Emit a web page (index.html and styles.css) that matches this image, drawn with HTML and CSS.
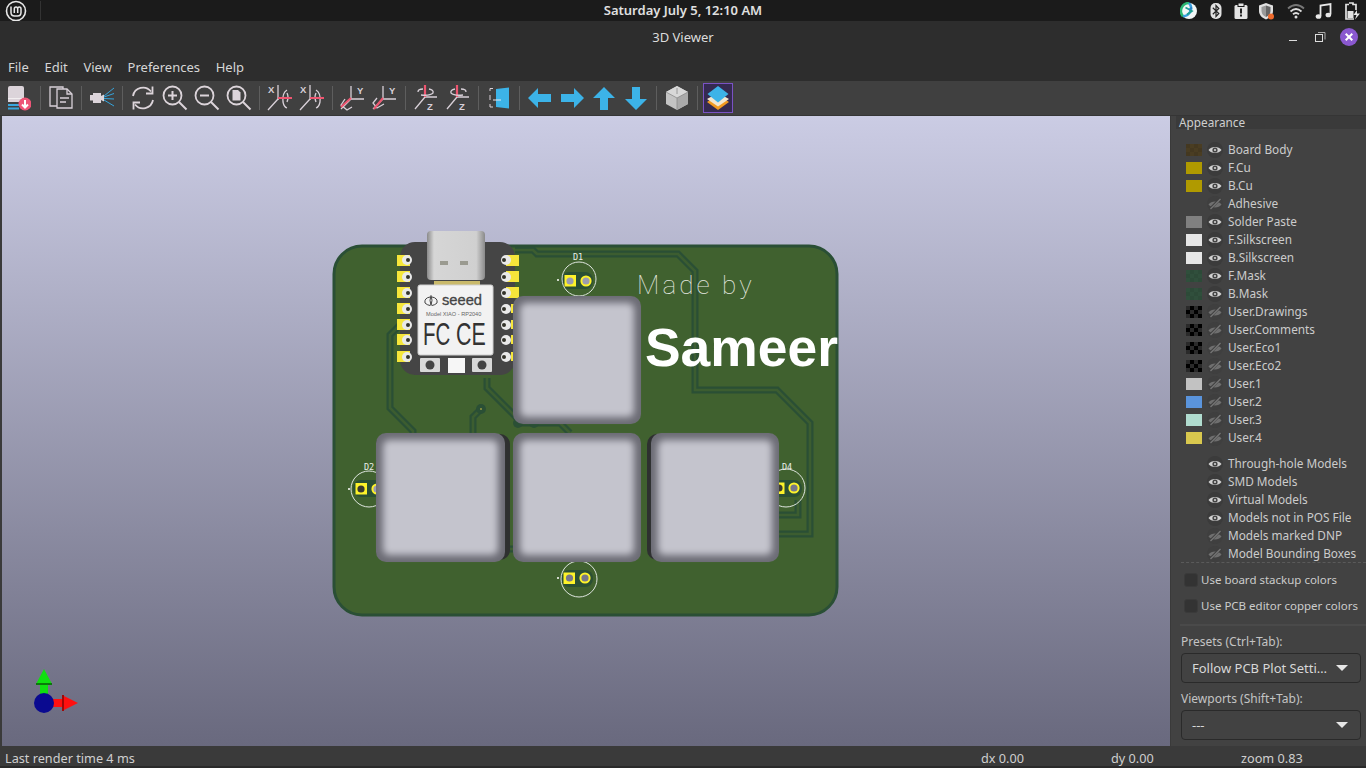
FILE: index.html
```html
<!DOCTYPE html>
<html lang="en">
<head>
<meta charset="utf-8">
<title>3D Viewer</title>
<link rel="stylesheet" href="styles.css">
</head>
<body>
<svg class="defs" width="0" height="0">
  <defs>
    <symbol id="eye" viewBox="0 0 16 16"><circle cx="8" cy="8" r="8" fill="#3b3b3b"/><path d="M1.5 8C4 4 12 4 14.500 8C12 12 4 12 1.500 8Z" fill="#d0d0d0"/><circle cx="8" cy="8" r="2.600" fill="#444"/><circle cx="8" cy="8" r="1.100" fill="#d0d0d0"/></symbol>
    <symbol id="eyeoff" viewBox="0 0 16 16"><circle cx="8" cy="8" r="8" fill="#3f3f3f"/><path d="M1.500 8.500C4 4.500 12 4.500 14.500 8.500C12 12.500 4 12.500 1.500 8.500Z" fill="#6f6f6f"/><path d="M3 13L13 3" stroke="#3f3f3f" stroke-width="2.600"/><path d="M3.500 13L13.500 3" stroke="#777" stroke-width="1.200"/></symbol>
    <filter id="soft" x="-20%" y="-20%" width="140%" height="140%"><feGaussianBlur stdDeviation="3.500"/></filter>
    <linearGradient id="usb" x1="0" x2="1" y1="0" y2="0"><stop offset="0" stop-color="#8a8a8a"/><stop offset=".12" stop-color="#d6d6d6"/><stop offset=".85" stop-color="#d0d0d0"/><stop offset="1" stop-color="#8a8a8a"/></linearGradient>
    <g id="trace-set">
      <path d="M515 250H533L537 254H678L695 271V390H777L810 423V534H770"/>
      <path d="M403 322L390 335V408L413 431V440"/>
      <path d="M481 409L473 417V440"/>
      <path d="M487 378V388L516 417L520 423H560L570 433"/>
      <path d="M504 549H516"/>
      <path d="M775 515H798V500"/>
    </g>
  </defs>
</svg>

<header class="panel">
  <svg class="mint" viewBox="0 0 22 22"><circle cx="11" cy="11" r="9.500" fill="none" stroke="#e8e8e8" stroke-width="1.600"/><path d="M6 6.500V12.500Q6 16 9.500 16H12.500Q16 16 16 12.500V9Q16 7 14.300 7Q12.700 7 12.700 9V13M12.700 9Q12.700 7 11 7Q9.300 7 9.300 9V13" fill="none" stroke="#e8e8e8" stroke-width="1.500"/></svg>
  <span class="panel-sep"></span>
  <span class="clock">Saturday July 5, 12:10 AM</span>
  <div class="tray">
    <svg class="tray-icon t1" viewBox="0 0 18 18"><circle cx="9" cy="9" r="8" fill="#f2f6f6"/><path d="M9 1A8 8 0 0 0 3 14.300" fill="none" stroke="#2bb673" stroke-width="2.500"/><path d="M9 1A8 8 0 0 1 3 14.300" fill="none" stroke="#3a9fe0" stroke-width="2.500"/><path d="M5.500 5.500L12 9L7 12.500" fill="none" stroke="#1e9f8f" stroke-width="1.700"/><path d="M12 5.500L9 8" fill="none" stroke="#2a80c0" stroke-width="1.700"/></svg>
    <svg class="tray-icon t2" viewBox="0 0 18 18"><rect x="3.500" y="1" width="11" height="16" rx="5" fill="#e2e2e2"/><path d="M5.800 5.800L11.800 11.500L9 14.500V3.500L11.800 6.500L5.800 12.200" fill="none" stroke="#222" stroke-width="1.200"/></svg>
    <svg class="tray-icon t3" viewBox="0 0 18 18"><rect x="2.500" y="3" width="13" height="14" rx="1.500" fill="#e4e4e4"/><rect x="6" y="1" width="6" height="3.500" fill="#e4e4e4" stroke="#1a1a1a"/><rect x="8" y="6.500" width="2" height="5" fill="#222"/><rect x="8" y="12.500" width="2" height="2" fill="#222"/></svg>
    <svg class="tray-icon t4" viewBox="0 0 18 18"><path d="M9 1L16 3.500V9C16 13 13 16 9 17.500C5 16 2 13 2 9V3.500Z" fill="#e0e0e0"/><path d="M9 3.500L13.500 5V9C13.500 12 11.500 14 9 15Z" fill="#666"/><path d="M9 3.500L4.500 5V9C4.500 12 6.500 14 9 15Z" fill="#9a9a9a"/><circle cx="14" cy="14.500" r="3" fill="#ee6a2c"/></svg>
    <svg class="tray-icon t5" viewBox="0 0 18 18"><path d="M1 6.500Q9 -.5 17 6.500" fill="none" stroke="#777" stroke-width="1.800"/><path d="M3.500 9.500Q9 4.500 14.500 9.500" fill="none" stroke="#ddd" stroke-width="1.800"/><path d="M6 12.300Q9 9.700 12 12.300" fill="none" stroke="#ddd" stroke-width="1.800"/><circle cx="9" cy="15" r="1.500" fill="#ddd"/></svg>
    <svg class="tray-icon t6" viewBox="0 0 18 18"><path d="M5.500 14V3.500L15.500 2V12.500" fill="none" stroke="#e8e8e8" stroke-width="1.800"/><ellipse cx="3.500" cy="14.500" rx="2.800" ry="2.300" fill="#e8e8e8"/><ellipse cx="13.300" cy="13" rx="2.800" ry="2.300" fill="#e8e8e8"/></svg>
    <svg class="tray-icon t7" viewBox="0 0 18 18"><path d="M6 1H10V2.500H13V8M11 17H3V2.500H6" fill="none" stroke="#e2e2e2" stroke-width="1.700"/><rect x="4.500" y="9" width="6" height="7" fill="#e2e2e2"/><path d="M14 8L10.500 13H13.500L12 17.500L17 11.500H14Z" fill="#e8e8e8"/></svg>
  </div>
</header>

<div class="titlebar">
  <span class="title">3D Viewer</span>
  <div class="win-buttons">
    <svg class="win-icon" viewBox="0 0 14 14"><rect x="3" y="10" width="8" height="1" fill="#ddd"/></svg>
    <svg class="win-icon" viewBox="0 0 14 14"><path d="M5 2.500H12V9.500" fill="none" stroke="#aaa"/><rect x="2.500" y="4.500" width="7" height="7" fill="none" stroke="#ddd"/></svg>
    <svg class="win-close" viewBox="0 0 18 18"><circle cx="9" cy="9" r="9" fill="#8a58cf"/><path d="M5.700 5.700L12.300 12.300M12.300 5.700L5.700 12.300" stroke="#fff" stroke-width="2"/></svg>
  </div>
</div>

<nav class="menubar">
  <span class="menu-item">File</span>
  <span class="menu-item">Edit</span>
  <span class="menu-item">View</span>
  <span class="menu-item">Preferences</span>
  <span class="menu-item">Help</span>
</nav>

<div class="toolbar">
  <button class="tool tool-first"><svg viewBox="0 0 26 26"><path d="M3 3Q3 1 5 1H17Q19 1 19 3V17H3Z" fill="#dcd4da"/><path d="M3 13.500H19" stroke="#f2eef0"/><rect x="3" y="19" width="11" height="2" fill="#39a6dd"/><rect x="3" y="22.500" width="11" height="2" fill="#39a6dd"/><circle cx="20" cy="19" r="6.500" fill="#ee5577"/><path d="M20 15V22M17 19.500L20 22.500L23 19.500" fill="none" stroke="#fff" stroke-width="2"/></svg></button>
  <span class="sep"></span>
  <button class="tool"><svg viewBox="0 0 26 26"><path d="M2 2H15V21H2Z" fill="none" stroke="#d8d0d8" stroke-width="1.300"/><path d="M9 4H19L24 9V23H9Z" fill="#404040" stroke="#d8d0d8" stroke-width="1.300"/><path d="M19 4V9H24" fill="none" stroke="#d8d0d8" stroke-width="1.300"/><path d="M12 13H21M12 17H18" stroke="#d8d0d8" stroke-width="1.300"/></svg></button>
  <span class="sep"></span>
  <button class="tool"><svg viewBox="0 0 26 26"><path d="M1 10H4V8H12V11L15 9.500V16.500L12 15V18H4V15.500H1Z" fill="#dcd4da"/><path d="M15 11L25 3M15 12L25 8.500M15 13.500L25 14M15 15L25 21" stroke="#35a5dd" stroke-width="1"/></svg></button>
  <span class="sep"></span>
  <button class="tool"><svg viewBox="0 0 26 26"><path d="M3 11A10.200 10.200 0 0 1 21 6.500M23 15A10.200 10.200 0 0 1 5 19.500" fill="none" stroke="#dcd4da" stroke-width="1.800"/><path d="M22.500 1.500V8.500H16M3.500 24.500V17.500H10" fill="none" stroke="#dcd4da" stroke-width="1.800"/></svg></button>
  <button class="tool"><svg viewBox="0 0 26 26"><circle cx="10.500" cy="10.500" r="9" fill="none" stroke="#dcd4da" stroke-width="1.800"/><path d="M17 17L24.500 24.500" stroke="#dcd4da" stroke-width="2"/><path d="M10.500 6V15M6 10.500H15" stroke="#dcd4da" stroke-width="2"/></svg></button>
  <button class="tool"><svg viewBox="0 0 26 26"><circle cx="10.500" cy="10.500" r="9" fill="none" stroke="#dcd4da" stroke-width="1.800"/><path d="M17 17L24.500 24.500" stroke="#dcd4da" stroke-width="2"/><path d="M6 10.500H15" stroke="#dcd4da" stroke-width="2"/></svg></button>
  <button class="tool"><svg viewBox="0 0 26 26"><circle cx="10.500" cy="10.500" r="9" fill="none" stroke="#dcd4da" stroke-width="1.800"/><path d="M17 17L24.500 24.500" stroke="#dcd4da" stroke-width="2"/><path d="M6.500 5H12L14.500 7.500V15.500H6.500Z" fill="#dcd4da"/></svg></button>
  <span class="sep"></span>
  <button class="tool"><svg viewBox="0 0 26 26"><text x="1" y="8" class="axis-letter">X</text><path d="M11 0V14M1 25L11 14H12" fill="none" stroke="#d8d0d8" stroke-width="1.300"/><path d="M20 5Q15 8 16 17Q17 22 20 23M20 8Q22 12 20 17" fill="none" stroke="#d8d0d8" stroke-width="1.300"/><rect x="11" y="12" width="14" height="2" fill="#ee5570"/></svg></button>
  <button class="tool"><svg viewBox="0 0 26 26"><text x="1" y="8" class="axis-letter">X</text><path d="M11 0V14M1 25L11 14H12" fill="none" stroke="#d8d0d8" stroke-width="1.300"/><path d="M17 5Q22 8 21 17Q20 22 17 23M17 8Q15 12 17 17" fill="none" stroke="#d8d0d8" stroke-width="1.300"/><rect x="11" y="12" width="14" height="2" fill="#ee5570"/></svg></button>
  <span class="sep"></span>
  <button class="tool"><svg viewBox="0 0 26 26"><text x="17" y="9" class="axis-letter">Y</text><path d="M11 1V14H24M1 24L11 14" fill="none" stroke="#d8d0d8" stroke-width="1.300"/><path d="M5 14L1 20L7 25L12 22" fill="none" stroke="#d8d0d8" stroke-width="1.300"/><path d="M1 22L11 13" stroke="#ee5570" stroke-width="2"/></svg></button>
  <button class="tool"><svg viewBox="0 0 26 26"><text x="17" y="9" class="axis-letter">Y</text><path d="M11 1V14H24M1 24L11 14" fill="none" stroke="#d8d0d8" stroke-width="1.300"/><path d="M5 13L1 18L5 23L12 19" fill="none" stroke="#d8d0d8" stroke-width="1.300"/><path d="M2 24L11 13" stroke="#ee5570" stroke-width="2"/></svg></button>
  <span class="sep"></span>
  <button class="tool"><svg viewBox="0 0 26 26"><text x="14" y="25" class="axis-letter">Z</text><path d="M12 12H24M12 12L2 24" fill="none" stroke="#d8d0d8" stroke-width="1.300"/><path d="M12 0V12" stroke="#ee5570" stroke-width="2.200"/><path d="M5 7Q5 4 10 4M16 4Q21 5 20 8Q17 11 8 10" fill="none" stroke="#d8d0d8" stroke-width="1.300"/></svg></button>
  <button class="tool"><svg viewBox="0 0 26 26"><text x="14" y="25" class="axis-letter">Z</text><path d="M12 12H24M12 12L2 24" fill="none" stroke="#d8d0d8" stroke-width="1.300"/><path d="M12 0V12" stroke="#ee5570" stroke-width="2.200"/><path d="M21 7Q21 4 16 4M10 4Q5 5 6 8Q9 11 18 10" fill="none" stroke="#d8d0d8" stroke-width="1.300"/></svg></button>
  <span class="sep"></span>
  <button class="tool"><svg viewBox="0 0 26 26"><path d="M4 6V3.500H7M4 19V22H7M4 10V15" fill="none" stroke="#d8d0d8" stroke-width="1"/><path d="M10 4L23 2.500V23.500L10 22Z" fill="#3cb3e8"/><path d="M7 15H15" stroke="#e8e8f0" stroke-width="1"/></svg></button>
  <span class="sep"></span>
  <button class="tool"><svg viewBox="0 0 26 26"><path d="M1 13L11 3V9H24V17H11V23Z" fill="#3cb3e8"/></svg></button>
  <button class="tool"><svg viewBox="0 0 26 26"><path d="M25 13L15 3V9H2V17H15V23Z" fill="#3cb3e8"/></svg></button>
  <button class="tool"><svg viewBox="0 0 26 26"><path d="M13 2L24 13H17V25H9V13H2Z" fill="#3cb3e8"/></svg></button>
  <button class="tool"><svg viewBox="0 0 26 26"><path d="M13 25L24 14H17V2H9V14H2Z" fill="#3cb3e8"/></svg></button>
  <span class="sep"></span>
  <button class="tool"><svg viewBox="0 0 26 26"><path d="M13 1L24 7V19L13 25L2 19V7Z" fill="#c4c4c4"/><path d="M13 1L24 7L13 13L2 7Z" fill="#d8d8d8"/><path d="M13 13V25L24 19V7Z" fill="#aaa"/><path d="M13 3V9M13 13V25M13 13L2 7M13 13L24 7" stroke="#8a8a8a" stroke-width=".8" fill="none"/></svg></button>
  <span class="sep"></span>
  <button class="tool tool-active"><svg viewBox="0 0 26 26"><path d="M13 10L24 17L13 25L2 17Z" fill="#f29a1f"/><path d="M13 8L24 14L13 21.500L2 14Z" fill="#f2e7d0"/><path d="M13 1L23.500 9L13 17.500L2.500 9Z" fill="#3cb3e8"/></svg></button>
</div>

<main class="workspace">
  <div class="canvas">
    <svg class="scene" viewBox="2 116 1168 630" width="1168" height="630">
      <rect class="board" x="334" y="246" width="503" height="369" rx="28"/>
      <use href="#trace-set" class="trace-outer"/>
      <use href="#trace-set" class="trace-inner"/>
      <circle class="via" cx="481" cy="409" r="5"/><circle class="via-hole" cx="481" cy="409" r="1"/>
      <circle class="via" cx="518" cy="423" r="5"/>
      <circle class="via" cx="534" cy="423" r="5"/>

      <!-- LED footprints -->
      <g class="led">
        <rect class="mask" x="561" y="272" width="32" height="17" rx="8"/>
        <circle class="silk" cx="579" cy="279" r="17"/>
        <rect class="pad" x="564.500" y="275" width="11.500" height="11.500"/><circle class="drill" cx="570" cy="281" r="3.600"/>
        <circle class="pad-ring" cx="586" cy="281" r="4.600"/>
        <circle class="dot" cx="558" cy="280" r="1"/>
        <text class="ref" x="578" y="260">D1</text>
      </g>
      <g class="led">
        <rect class="mask" x="353" y="480" width="32" height="17" rx="8"/>
        <circle class="silk" cx="369" cy="489" r="18"/>
        <rect class="pad" x="355.500" y="483" width="11.500" height="11.500"/><circle class="drill-dark" cx="361" cy="489" r="3.600"/>
        <circle class="pad-ring" cx="377" cy="489" r="4.600"/>
        <circle class="dot" cx="349" cy="489" r="1"/>
        <text class="ref" x="369" y="470">D2</text>
      </g>
      <g class="led">
        <rect class="mask" x="561" y="570" width="32" height="17" rx="8"/>
        <circle class="silk" cx="579" cy="579" r="18"/>
        <rect class="pad" x="563.500" y="572.500" width="11.500" height="11.500"/><circle class="drill-grey" cx="569.500" cy="578" r="3.600"/>
        <circle class="pad-ring-grey" cx="585" cy="578" r="4.600"/>
        <circle class="dot" cx="558" cy="578" r="1"/>
      </g>
      <g class="led">
        <rect class="mask" x="770" y="480" width="32" height="17" rx="8"/>
        <circle class="silk" cx="786" cy="488" r="19"/>
        <rect class="pad" x="773" y="482.500" width="11.500" height="11.500"/><circle class="drill-dark" cx="779" cy="488" r="3.600"/>
        <circle class="pad-ring-grey" cx="794" cy="488" r="4.600"/>
        <text class="ref" x="787" y="470">D4</text>
      </g>

      <!-- Board text -->
      <text class="made" x="637" y="294">Made by</text>
      <text class="name" x="645" y="366">Sameer</text>

      <!-- XIAO module -->
      <g class="xiao">
        <rect class="x-body" x="400" y="242" width="115" height="133" rx="15"/>
        <g class="x-pads">
          <rect x="397" y="255" width="13" height="11"/><rect x="397" y="271" width="13" height="11"/><rect x="397" y="287" width="13" height="11"/><rect x="397" y="303" width="13" height="11"/><rect x="397" y="319" width="13" height="11"/><rect x="397" y="334" width="13" height="11"/><rect x="397" y="351" width="13" height="11"/>
          <rect x="506" y="255" width="13" height="11"/><rect x="506" y="271" width="13" height="11"/><rect x="506" y="287" width="13" height="11"/><rect x="511" y="304" width="3" height="9"/><rect x="511" y="320" width="3" height="9"/><rect x="511" y="335" width="3" height="9"/><rect x="511" y="352" width="3" height="9"/>
        </g>
        <g class="x-holes">
          <circle cx="407" cy="260" r="5"/><circle cx="407" cy="277" r="5"/><circle cx="407" cy="293" r="5"/><circle cx="407" cy="309" r="5"/><circle cx="407" cy="325" r="5"/><circle cx="407" cy="340" r="5"/><circle cx="407" cy="357" r="5"/>
          <circle cx="506" cy="260" r="5"/><circle cx="506" cy="277" r="5"/><circle cx="506" cy="293" r="5"/><circle cx="506" cy="309" r="5"/><circle cx="506" cy="325" r="5"/><circle cx="506" cy="340" r="5"/><circle cx="506" cy="357" r="5"/>
        </g>
        <g class="x-inner">
          <circle cx="408" cy="260" r="2"/><circle cx="408" cy="277" r="2"/><circle cx="408" cy="293" r="2"/><circle cx="408" cy="309" r="2"/><circle cx="408" cy="325" r="2"/><circle cx="408" cy="340" r="2"/><circle cx="408" cy="357" r="2"/>
          <circle cx="504" cy="260" r="2"/><circle cx="504" cy="277" r="2"/><circle cx="504" cy="293" r="2"/><circle cx="504" cy="309" r="2"/><circle cx="504" cy="325" r="2"/><circle cx="504" cy="340" r="2"/><circle cx="504" cy="357" r="2"/>
        </g>
        <rect x="434" y="281" width="46" height="4" fill="#c9b96a"/>
        <rect x="427" y="231" width="58" height="49" rx="4" fill="url(#usb)"/>
        <rect x="440" y="261" width="8" height="4" fill="#9a9a90"/><rect x="460" y="261" width="8" height="4" fill="#9a9a90"/>
        <rect x="418" y="285" width="75" height="70" rx="2" fill="#f2f2f2" stroke="#cfcfcf"/>
        <path d="M430 297Q424 298 425 303Q427 305 430 305.500M431 295.500Q429 300 431 305.500Q433 300 431 295.500M432 297Q438 298 437 303Q435 305 432 305.500" fill="none" stroke="#444" stroke-width="1"/>
        <text class="x-seeed" x="442" y="305">seeed</text>
        <text class="x-model" x="426" y="316">Model XIAO - RP2040</text>
        <text class="x-fcc" transform="translate(423 345) scale(.66 1)">FC</text>
        <text class="x-ce" transform="translate(456 345) scale(.69 1)">CE</text>
        <rect x="420" y="358" width="20" height="14" rx="1" fill="#d8d8d8"/><circle cx="430" cy="365" r="4.500" fill="#444"/>
        <rect x="448" y="358" width="17" height="15" fill="#f6f6f6"/>
        <rect x="472" y="358" width="20" height="14" rx="1" fill="#d8d8d8"/><circle cx="482" cy="365" r="4.500" fill="#444"/>
      </g>

      <!-- Keycaps -->
      <rect class="key-side" x="376" y="434" width="134" height="126" rx="10"/>
      <rect class="key-side" x="647" y="434" width="20" height="126" rx="10"/>
      <rect class="key-base" x="513" y="296" width="128" height="128" rx="10"/>
      <rect class="key-top" x="520" y="303" width="114" height="114" rx="6" filter="url(#soft)"/>
      <rect class="key-base" x="376" y="433" width="129" height="129" rx="10"/>
      <rect class="key-top" x="383" y="440" width="115" height="115" rx="6" filter="url(#soft)"/>
      <rect class="key-base" x="513" y="433" width="128" height="129" rx="10"/>
      <rect class="key-top" x="520" y="440" width="114" height="115" rx="6" filter="url(#soft)"/>
      <rect class="key-base" x="651" y="433" width="128" height="129" rx="10"/>
      <rect class="key-top" x="658" y="440" width="114" height="115" rx="6" filter="url(#soft)"/>

      <!-- Axis gizmo -->
      <path d="M40 697V684H36L44 669L52 684H48V697Z" fill="#10e010"/>
      <path d="M36 684H52" stroke="#0a7a0a" stroke-width="2"/>
      <path d="M50 699H62V695L78 703L62 711V707H50Z" fill="#ff1010"/>
      <path d="M63 695V711" stroke="#a00808" stroke-width="2"/>
      <circle cx="44" cy="703" r="10" fill="#0a0a90"/>
    </svg>
  </div>

  <aside class="side">
    <div class="side-title">Appearance</div>
    <div class="layers">
      <div class="row"><span class="swatch s-body"></span><svg class="eye"><use href="#eye"/></svg><span class="lbl">Board Body</span></div>
      <div class="row"><span class="swatch s-cu"></span><svg class="eye"><use href="#eye"/></svg><span class="lbl">F.Cu</span></div>
      <div class="row"><span class="swatch s-cu"></span><svg class="eye"><use href="#eye"/></svg><span class="lbl">B.Cu</span></div>
      <div class="row"><span class="swatch s-none"></span><svg class="eye"><use href="#eyeoff"/></svg><span class="lbl">Adhesive</span></div>
      <div class="row"><span class="swatch s-paste"></span><svg class="eye"><use href="#eye"/></svg><span class="lbl">Solder Paste</span></div>
      <div class="row"><span class="swatch s-silk"></span><svg class="eye"><use href="#eye"/></svg><span class="lbl">F.Silkscreen</span></div>
      <div class="row"><span class="swatch s-silk"></span><svg class="eye"><use href="#eye"/></svg><span class="lbl">B.Silkscreen</span></div>
      <div class="row"><span class="swatch s-mask"></span><svg class="eye"><use href="#eye"/></svg><span class="lbl">F.Mask</span></div>
      <div class="row"><span class="swatch s-mask"></span><svg class="eye"><use href="#eye"/></svg><span class="lbl">B.Mask</span></div>
      <div class="row"><span class="swatch s-black"></span><svg class="eye"><use href="#eyeoff"/></svg><span class="lbl">User.Drawings</span></div>
      <div class="row"><span class="swatch s-black"></span><svg class="eye"><use href="#eyeoff"/></svg><span class="lbl">User.Comments</span></div>
      <div class="row"><span class="swatch s-black"></span><svg class="eye"><use href="#eyeoff"/></svg><span class="lbl">User.Eco1</span></div>
      <div class="row"><span class="swatch s-black"></span><svg class="eye"><use href="#eyeoff"/></svg><span class="lbl">User.Eco2</span></div>
      <div class="row"><span class="swatch s-u1"></span><svg class="eye"><use href="#eyeoff"/></svg><span class="lbl">User.1</span></div>
      <div class="row"><span class="swatch s-u2"></span><svg class="eye"><use href="#eyeoff"/></svg><span class="lbl">User.2</span></div>
      <div class="row"><span class="swatch s-u3"></span><svg class="eye"><use href="#eyeoff"/></svg><span class="lbl">User.3</span></div>
      <div class="row"><span class="swatch s-u4"></span><svg class="eye"><use href="#eyeoff"/></svg><span class="lbl">User.4</span></div>
    </div>
    <div class="layers models">
      <div class="row"><span class="swatch s-none"></span><svg class="eye"><use href="#eye"/></svg><span class="lbl">Through-hole Models</span></div>
      <div class="row"><span class="swatch s-none"></span><svg class="eye"><use href="#eye"/></svg><span class="lbl">SMD Models</span></div>
      <div class="row"><span class="swatch s-none"></span><svg class="eye"><use href="#eye"/></svg><span class="lbl">Virtual Models</span></div>
      <div class="row"><span class="swatch s-none"></span><svg class="eye"><use href="#eye"/></svg><span class="lbl">Models not in POS File</span></div>
      <div class="row"><span class="swatch s-none"></span><svg class="eye"><use href="#eyeoff"/></svg><span class="lbl">Models marked DNP</span></div>
      <div class="row"><span class="swatch s-none"></span><svg class="eye"><use href="#eyeoff"/></svg><span class="lbl">Model Bounding Boxes</span></div>
    </div>
    <div class="dash"></div>
    <div class="check"><span class="box"></span><span class="lbl">Use board stackup colors</span></div>
    <div class="check check-two"><span class="box"></span><span class="lbl">Use PCB editor copper colors</span></div>
    <div class="rule"></div>
    <div class="field-label">Presets (Ctrl+Tab):</div>
    <div class="select"><span class="lbl">Follow PCB Plot Setti…</span><span class="caret"></span></div>
    <div class="field-label field-two">Viewports (Shift+Tab):</div>
    <div class="select"><span class="lbl">---</span><span class="caret"></span></div>
  </aside>
</main>

<footer class="status">
  <span class="st-main">Last render time 4 ms</span>
  <span class="st-cell">dx 0.00</span>
  <span class="st-cell">dy 0.00</span>
  <span class="st-cell">zoom 0.83</span>
</footer>
</body>
</html>
```

FILE: styles.css
```css
* { box-sizing: border-box; }
html, body { margin: 0; padding: 0; }
body {
  width: 1366px;
  height: 768px;
  overflow: hidden;
  display: flex;
  flex-direction: column;
  background: #2d2d2d;
  font-family: "Noto Sans", "Open Sans", sans-serif;
  color: #d6d6d6;
}
.defs { position: absolute; }

.panel {
  height: 21px;
  flex: none;
  display: flex;
  align-items: center;
  position: relative;
  background: #1b1b1b;
}
.mint { width: 22px; height: 22px; margin-left: 5px; }
.panel-sep { width: 1px; height: 19px; margin-left: 13px; background: #333; }
.clock {
  position: absolute;
  left: 0;
  right: 0;
  top: 1px;
  text-align: center;
  font-size: 13px;
  font-weight: 600;
  color: #e0e0e0;
}
.tray { margin-left: auto; display: flex; align-items: center; padding-right: 5px; position: relative; }
.tray-icon { width: 18px; height: 18px; }
.t2 { margin-left: 9px; }
.t3 { margin-left: 7px; }
.t4 { margin-left: 7px; }
.t5 { margin-left: 12px; }
.t6 { margin-left: 10px; }
.t7 { margin-left: 10px; }

.titlebar {
  height: 33px;
  flex: none;
  display: flex;
  align-items: center;
  justify-content: center;
  position: relative;
  padding-bottom: 2px;
  background: #2d2d2d;
}
.title { font-size: 13px; color: #dcdcdc; }
.win-buttons { position: absolute; right: 8px; top: 7px; display: flex; align-items: center; gap: 13px; }
.win-icon { width: 14px; height: 14px; }
.win-close { width: 18px; height: 18px; }

.menubar { height: 27px; flex: none; display: flex; align-items: center; padding-left: 8px; padding-bottom: 2px; gap: 15.700px; background: #2d2d2d; }
.menu-item { font-size: 13px; }

.toolbar {
  height: 35px;
  flex: none;
  display: flex;
  align-items: center;
  padding-left: 2px;
  background: #404040;
  border-bottom: 1px solid #353535;
}
.tool {
  width: 32px;
  height: 31px;
  flex: none;
  padding: 0;
  border: 1px solid transparent;
  background: none;
  display: flex;
  align-items: center;
  justify-content: center;
}
.tool svg { width: 26px; height: 26px; }
.tool-first { margin-right: 2px; }
.tool-active { width: 30px; height: 30px; margin-left: 1px; background: #352a50; border-color: #7a52c4; }
.sep { width: 1px; height: 24px; margin: 0 4px; flex: none; background: #5e5e5e; }
.axis-letter { font: 700 9.500px "Liberation Sans", sans-serif; fill: #d8d0d8; }

.workspace { flex: 1; min-height: 0; display: flex; }
.canvas {
  width: 1171px;
  flex: none;
  padding-left: 2px;
  background: #3a3a3a;
}
.scene { display: block; background: linear-gradient(#cbcce4, #69697e); }
.board { fill: #40612f; stroke: #2a4f35; stroke-width: 3; }
.trace-outer { fill: none; stroke: #2a4f35; stroke-width: 7; }
.trace-inner { fill: none; stroke: #3c5d30; stroke-width: 2.600; }
.via { fill: #2a4f35; }
.via-hole { fill: #9a9a40; }
.mask { fill: #2a4f35; }
.silk { fill: none; stroke: #dfe6df; stroke-width: 1; }
.pad { fill: #fdf22a; }
.drill { fill: #9c9cb0; }
.drill-dark { fill: #3a3a30; }
.drill-grey { fill: #77778a; }
.pad-ring { fill: #9c9cb0; stroke: #fdf22a; stroke-width: 2; }
.pad-ring-grey { fill: #77778a; stroke: #fdf22a; stroke-width: 2; }
.dot { fill: #fff; }
.ref { font: 400 8.500px "DejaVu Sans Mono", monospace; fill: #e8eee8; text-anchor: middle; }
.made { font: 100 26px Roboto, "Liberation Sans", sans-serif; letter-spacing: 3.100px; fill: #e6eae2; }
.name { font: 700 53.400px "Liberation Sans", sans-serif; fill: #fff; }
.x-body { fill: #454545; }
.x-pads { fill: #f6e63a; }
.x-holes { fill: #e9e9e9; }
.x-inner { fill: #33332a; }
.x-seeed { font: 400 14.700px "Liberation Sans", sans-serif; fill: #444; stroke: #444; stroke-width: .3px; }
.x-model { font: 400 5.600px "Liberation Sans", sans-serif; fill: #666; }
.x-fcc { font: 400 31px "Liberation Sans", sans-serif; fill: #333; }
.x-ce { font: 400 31px "Liberation Sans", sans-serif; fill: #333; }
.key-side { fill: #2e3030; }
.key-base { fill: #6c6c75; }
.key-top { fill: #c4c4cd; }

.side { flex: 1; min-width: 0; background: #424242; padding-left: 5px; font-size: 11.800px; color: #cccccc; }
.side-title {
  height: 13px;
  line-height: 12px;
  padding-left: 3px;
  background: #3a3a3a;
  color: #cfcfcf;
  font-size: 11.800px;
}
.layers { margin-top: 12px; }
.models { margin-top: 8px; }
.row { height: 18px; display: flex; align-items: center; white-space: nowrap; }
.lbl { margin-bottom: 1px; }
.row .lbl { line-height: 16px; margin-bottom: 2px; }
.swatch { width: 16px; height: 12px; margin-left: 10px; flex: none; }
.eye { width: 16px; height: 16px; margin-left: 5px; margin-right: 5px; flex: none; }
.s-none { background: transparent; }
.s-body { background: conic-gradient(#4a3d22 25%, #443820 0 50%, #4a3d22 0 75%, #443820 0) 0 0 / 8px 8px; }
.s-cu { background: #b09a00; }
.s-paste { background: #808080; }
.s-silk { background: #e6e6e6; }
.s-mask { background: conic-gradient(#2d4a38 25%, #304f3c 0 50%, #2d4a38 0 75%, #304f3c 0) 0 0 / 8px 8px; }
.s-black { background: conic-gradient(#000 25%, #2a2a2a 0 50%, #000 0 75%, #2a2a2a 0) 0 0 / 8px 8px; }
.s-u1 { background: #c2c2c2; }
.s-u2 { background: #5a94dc; }
.s-u3 { background: #b0dccf; }
.s-u4 { background: #d9c84e; }
.dash { margin: -1px 0 0 5px; height: 0; border-top: 1px dashed #5a5a5a; }
.check { height: 18px; margin-top: 8px; display: flex; align-items: center; white-space: nowrap; font-size: 11.500px; }
.check-two { margin-top: 8px; }
.box { width: 14px; height: 14px; margin-left: 8px; margin-right: 3px; border-radius: 3px; background: #333; border: 1px solid #3a3a3a; flex: none; }
.rule { height: 2px; margin: 9px 0 0 4px; background: #4a4a4a; }
.field-label { height: 16px; line-height: 16px; margin: 8px 0 3px 5px; font-size: 12px; color: #c4c4c4; }
.field-two { margin-top: 8px; margin-bottom: 3px; }
.select {
  width: 180px;
  height: 30px;
  margin-left: 5px;
  display: flex;
  align-items: center;
  justify-content: space-between;
  padding: 0 12px 0 10px;
  background: #424242;
  border: 1px solid #2a2a2a;
  border-radius: 4px;
  font-size: 13px;
  color: #d8d8d8;
}
.caret { width: 0; height: 0; border-left: 6px solid transparent; border-right: 6px solid transparent; border-top: 6px solid #e6e6e6; }

.status {
  height: 22px;
  flex: none;
  display: flex;
  align-items: center;
  padding-left: 5px;
  padding-top: 4px;
  background: #3a3a3a;
  border-bottom: 2px solid #2a2a2a;
  font-size: 12.700px;
  color: #cfcfcf;
}
.st-main { width: 976px; flex: none; }
.st-cell { width: 130px; flex: none; }
```
